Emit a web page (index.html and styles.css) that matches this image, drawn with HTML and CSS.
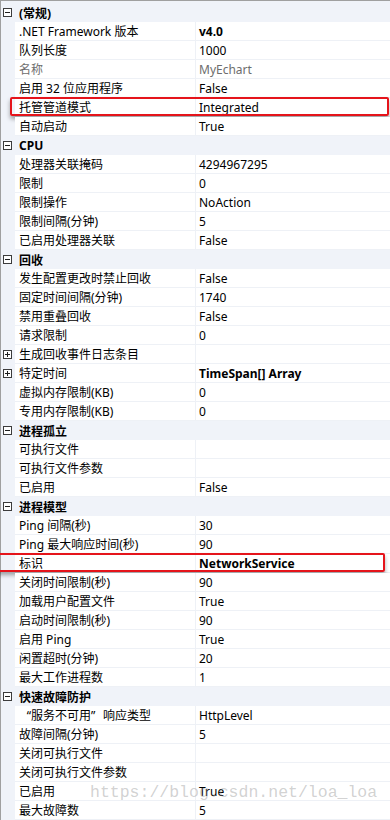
FILE: index.html
```html
<!DOCTYPE html>
<html lang="zh-CN">
<head>
    <meta charset="UTF-8">
    <meta name="viewport" content="width=device-width, initial-scale=1.0">
    <title>高级设置</title>
    <link rel="stylesheet" href="styles.css">
</head>
<body>
    <div class="grid">
        <div class="cat"><span class="toggle minus"></span><span class="cat-name">(常规)</span></div>
        <div class="row"><span class="gutter"></span><span class="name">.NET Framework 版本</span><span class="value bold">v4.0</span></div>
        <div class="row"><span class="gutter"></span><span class="name">队列长度</span><span class="value">1000</span></div>
        <div class="row muted"><span class="gutter"></span><span class="name">名称</span><span class="value">MyEchart</span></div>
        <div class="row"><span class="gutter"></span><span class="name">启用 32 位应用程序</span><span class="value">False</span></div>
        <div class="row marked first-mark"><span class="gutter"></span><span class="name">托管管道模式</span><span class="value">Integrated</span></div>
        <div class="row"><span class="gutter"></span><span class="name">自动启动</span><span class="value">True</span></div>

        <div class="cat"><span class="toggle minus"></span><span class="cat-name">CPU</span></div>
        <div class="row"><span class="gutter"></span><span class="name">处理器关联掩码</span><span class="value">4294967295</span></div>
        <div class="row"><span class="gutter"></span><span class="name">限制</span><span class="value">0</span></div>
        <div class="row"><span class="gutter"></span><span class="name">限制操作</span><span class="value">NoAction</span></div>
        <div class="row"><span class="gutter"></span><span class="name">限制间隔(分钟)</span><span class="value">5</span></div>
        <div class="row"><span class="gutter"></span><span class="name">已启用处理器关联</span><span class="value">False</span></div>

        <div class="cat"><span class="toggle minus"></span><span class="cat-name">回收</span></div>
        <div class="row"><span class="gutter"></span><span class="name">发生配置更改时禁止回收</span><span class="value">False</span></div>
        <div class="row"><span class="gutter"></span><span class="name">固定时间间隔(分钟)</span><span class="value">1740</span></div>
        <div class="row"><span class="gutter"></span><span class="name">禁用重叠回收</span><span class="value">False</span></div>
        <div class="row"><span class="gutter"></span><span class="name">请求限制</span><span class="value">0</span></div>
        <div class="row"><span class="gutter"><span class="toggle plus"></span></span><span class="name">生成回收事件日志条目</span><span class="value"></span></div>
        <div class="row"><span class="gutter"><span class="toggle plus"></span></span><span class="name">特定时间</span><span class="value bold">TimeSpan[] Array</span></div>
        <div class="row"><span class="gutter"></span><span class="name">虚拟内存限制(KB)</span><span class="value">0</span></div>
        <div class="row"><span class="gutter"></span><span class="name">专用内存限制(KB)</span><span class="value">0</span></div>

        <div class="cat"><span class="toggle minus"></span><span class="cat-name">进程孤立</span></div>
        <div class="row"><span class="gutter"></span><span class="name">可执行文件</span><span class="value"></span></div>
        <div class="row"><span class="gutter"></span><span class="name">可执行文件参数</span><span class="value"></span></div>
        <div class="row"><span class="gutter"></span><span class="name">已启用</span><span class="value">False</span></div>

        <div class="cat"><span class="toggle minus"></span><span class="cat-name">进程模型</span></div>
        <div class="row"><span class="gutter"></span><span class="name">Ping 间隔(秒)</span><span class="value">30</span></div>
        <div class="row"><span class="gutter"></span><span class="name">Ping 最大响应时间(秒)</span><span class="value">90</span></div>
        <div class="row marked second-mark"><span class="gutter"></span><span class="name">标识</span><span class="value bold">NetworkService</span></div>
        <div class="row"><span class="gutter"></span><span class="name">关闭时间限制(秒)</span><span class="value">90</span></div>
        <div class="row"><span class="gutter"></span><span class="name">加载用户配置文件</span><span class="value">True</span></div>
        <div class="row"><span class="gutter"></span><span class="name">启动时间限制(秒)</span><span class="value">90</span></div>
        <div class="row"><span class="gutter"></span><span class="name">启用 Ping</span><span class="value">True</span></div>
        <div class="row"><span class="gutter"></span><span class="name">闲置超时(分钟)</span><span class="value">20</span></div>
        <div class="row"><span class="gutter"></span><span class="name">最大工作进程数</span><span class="value">1</span></div>

        <div class="cat"><span class="toggle minus"></span><span class="cat-name">快速故障防护</span></div>
        <div class="row"><span class="gutter"></span><span class="name"><span class="quote open">“</span>服务不可用<span class="quote close">”</span>响应类型</span><span class="value">HttpLevel</span></div>
        <div class="row"><span class="gutter"></span><span class="name">故障间隔(分钟)</span><span class="value">5</span></div>
        <div class="row"><span class="gutter"></span><span class="name">关闭可执行文件</span><span class="value"></span></div>
        <div class="row"><span class="gutter"></span><span class="name">关闭可执行文件参数</span><span class="value"></span></div>
        <div class="row"><span class="gutter"></span><span class="name">已启用</span><span class="value">True</span></div>
        <div class="row"><span class="gutter"></span><span class="name">最大故障数</span><span class="value">5</span></div>
    </div>

    <div class="watermark">https://blog.csdn.net/loa_loa</div>
</body>
</html>
```

FILE: styles.css
```css
body {
    margin: 0;
    background-color: #ffffff;
    color: #000000;
    font-family: "Noto Sans", "Noto Sans CJK SC", sans-serif;
    font-size: 12px;
    overflow: hidden;
}
.grid {
    border-top: 1px solid #a0a0a0;
    border-left: 1px solid #a0a0a0;
    padding-top: 2px;
    background-color: #f0f3f9;
}
.cat, .row {
    display: flex;
    align-items: center;
    height: 19px;
    box-sizing: border-box;
    position: relative;
}
.cat {
    background-color: #f0f3f9;
    font-weight: bold;
}
.cat .toggle {
    margin-left: 2px;
}
.cat-name {
    margin-left: 7px;
}
.gutter {
    width: 14px;
    height: 100%;
    display: flex;
    align-items: center;
    flex-shrink: 0;
}
.gutter .toggle {
    margin-left: 2px;
}
.toggle {
    width: 9px;
    height: 9px;
    box-sizing: border-box;
    border: 1px solid #3c3c3c;
    position: relative;
    flex-shrink: 0;
    background-color: #ffffff;
}
.toggle::before {
    content: "";
    position: absolute;
    left: 1px;
    top: 3px;
    width: 5px;
    height: 1px;
    background-color: #1e1e1e;
}
.toggle.plus::after {
    content: "";
    position: absolute;
    left: 3px;
    top: 1px;
    width: 1px;
    height: 5px;
    background-color: #1e1e1e;
}
.name, .value {
    height: 100%;
    box-sizing: border-box;
    background-color: #ffffff;
    border-bottom: 1px solid #eef1f6;
    line-height: 19px;
    white-space: nowrap;
    overflow: hidden;
}
.name {
    width: 181px;
    padding-left: 4px;
    border-right: 1px solid #eef1f6;
    flex-shrink: 0;
}
.value {
    flex: 1;
    padding-left: 3px;
}
.quote {
    display: inline-block;
    width: 12px;
}
.quote.open {
    text-align: right;
}
.quote.close {
    text-align: left;
}
.bold {
    font-weight: bold;
}
.muted .name, .muted .value {
    color: #6d6d6d;
}
.marked::after {
    content: "";
    position: absolute;
    top: -1px;
    height: 19px;
    box-sizing: border-box;
    border: 2px solid #e5141b;
    border-radius: 2px;
    box-shadow: 0 3px 4px rgba(0, 0, 0, 0.35);
    pointer-events: none;
}
.first-mark::after {
    left: 9px;
    right: 1px;
}
.second-mark::after {
    left: -4px;
    right: 5px;
}
.watermark {
    position: absolute;
    left: 90px;
    top: 783px;
    font-family: "Liberation Mono", monospace;
    font-size: 16.5px;
    color: rgba(140, 140, 140, 0.4);
    white-space: nowrap;
}
```
